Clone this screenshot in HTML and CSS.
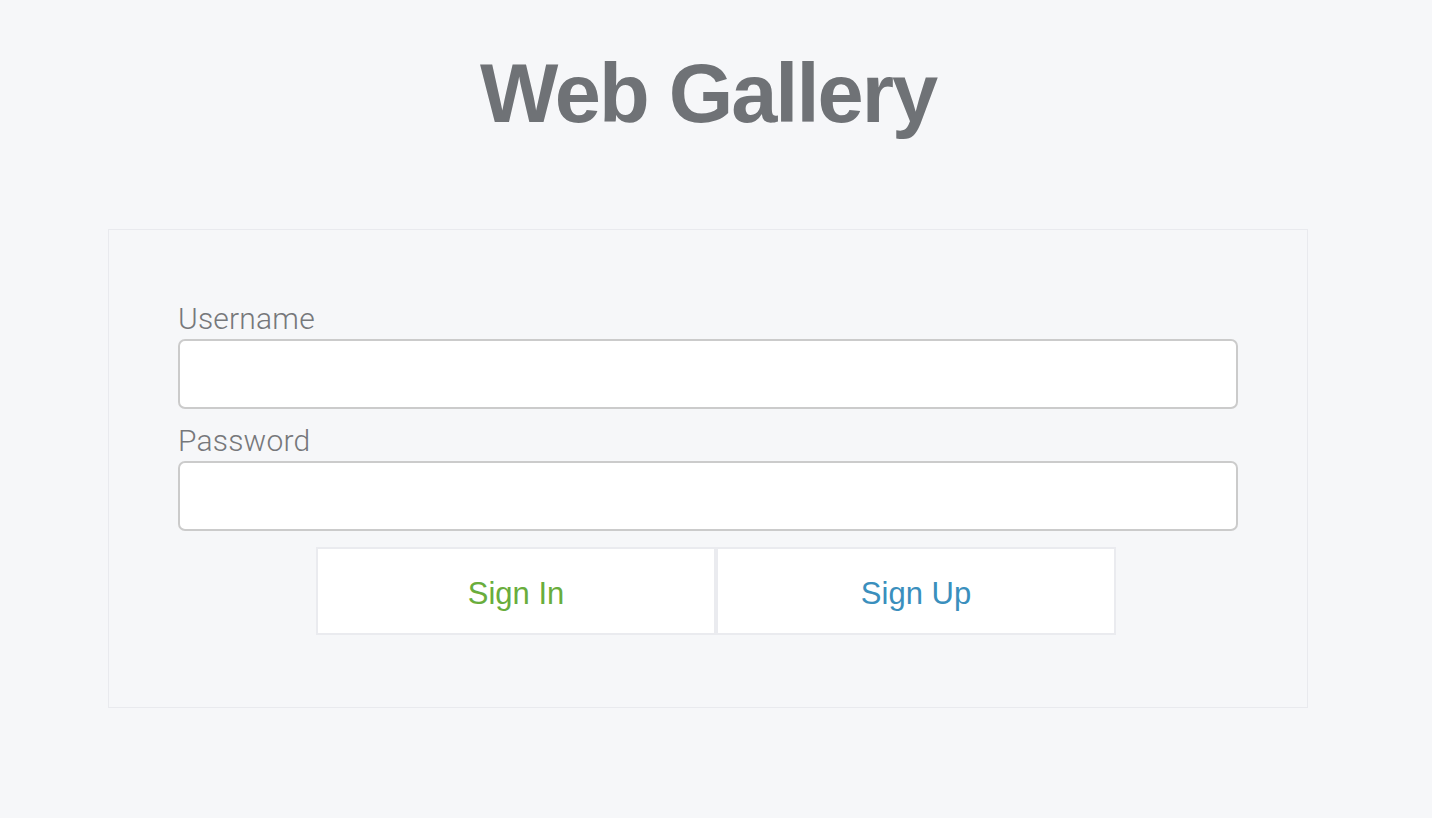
FILE: index.html
```html
<!DOCTYPE html>
<html lang="en">
<head>
<meta charset="utf-8">
<title>Web Gallery</title>
<link rel="stylesheet" href="styles.css">
</head>
<body>
<div class="page">
  <h1 class="title">Web Gallery</h1>
  <form class="login" onsubmit="return false">
    <label class="field-label" for="username">Username</label>
    <input class="field-input" id="username" type="text">
    <label class="field-label second" for="password">Password</label>
    <input class="field-input" id="password" type="password">
    <div class="actions">
      <button class="btn btn-signin" type="button">Sign In</button>
      <button class="btn btn-signup" type="button">Sign Up</button>
    </div>
  </form>
</div>
</body>
</html>
```
FILE: styles.css
```css
html, body {
  margin: 0;
  padding: 0;
  background: #f6f7f9;
  height: 100%;
}
body {
  font-family: "Liberation Sans", Arial, sans-serif;
}
.page {
  width: 1400px;
  margin-left: 8px;
  padding-top: 52px;
  display: flex;
  flex-direction: column;
  align-items: center;
}
.title {
  margin: 0;
  font-size: 83px;
  line-height: 83px;
  font-weight: 700;
  letter-spacing: -2px;
  color: #6f7276;
}
.login {
  margin-top: 94px;
  box-sizing: border-box;
  width: 1200px;
  height: 479px;
  border: 1px solid #e9eaee;
  padding: 72px 69px 0 69px;
  display: flex;
  flex-direction: column;
}
.field-label {
  font-family: Roboto, "Liberation Sans", sans-serif;
  font-weight: 300;
  font-size: 30px;
  line-height: 34px;
  color: #76787b;
  margin-bottom: 3px;
  letter-spacing: 0.2px;
}
.field-label.second {
  margin-top: 15px;
}
.field-input {
  box-sizing: border-box;
  width: 1060px;
  height: 70px;
  border: 2px solid #cbcbcb;
  border-radius: 7px;
  background: #fff;
  margin: 0;
  padding: 0 12px;
  font-size: 24px;
  outline: none;
}
.actions {
  margin-top: 16px;
  margin-left: 138px;
  display: flex;
}
.btn {
  box-sizing: border-box;
  width: 400px;
  height: 88px;
  border: 2px solid #eaebef;
  background: #fff;
  font-family: "Liberation Sans", Arial, sans-serif;
  font-size: 31px;
  padding: 5px 0 0 0;
  margin: 0;
  cursor: pointer;
}
.btn-signin {
  color: #69ad3c;
}
.btn-signup {
  color: #3a8fbd;
}
```
